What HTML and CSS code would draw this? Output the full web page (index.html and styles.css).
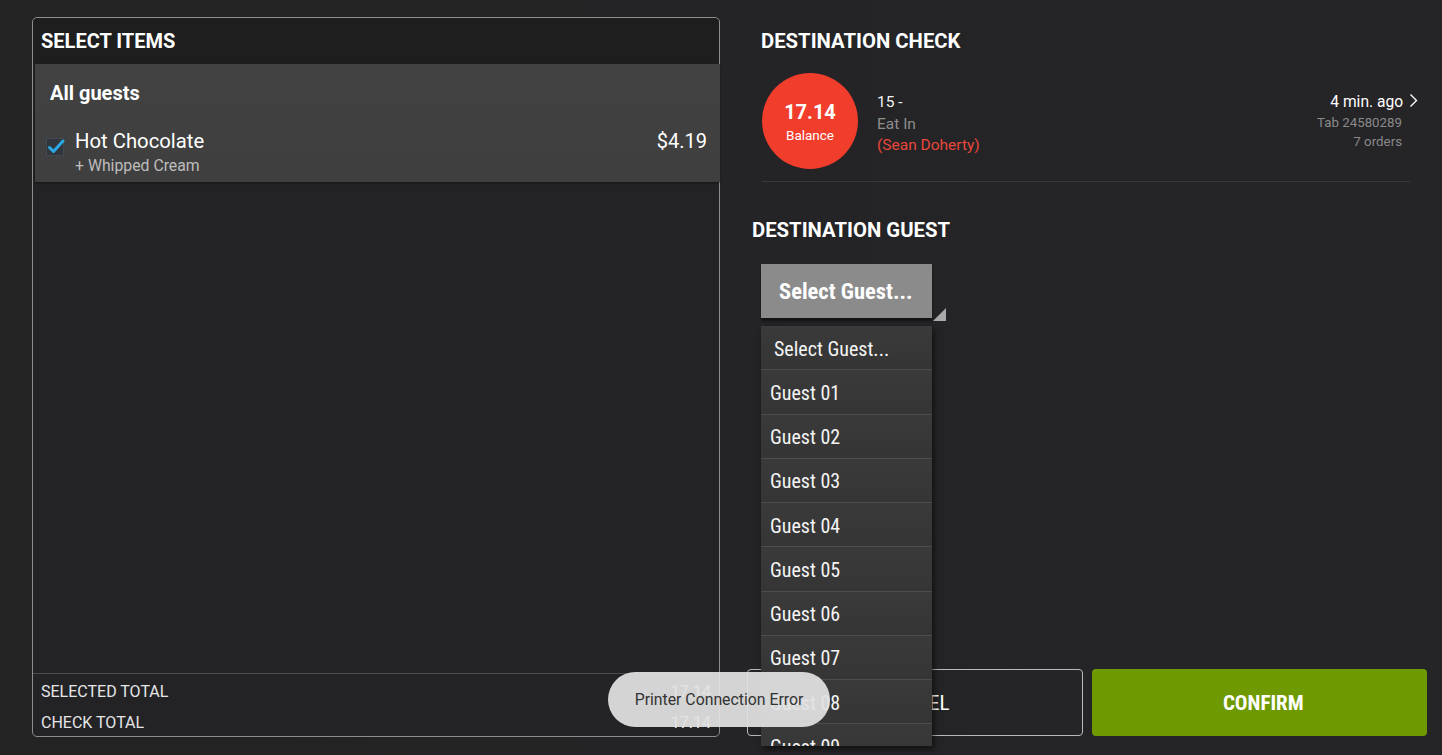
FILE: index.html
```html
<!DOCTYPE html>
<html lang="en">
<head>
<meta charset="utf-8">
<title>Move Items</title>
<link rel="stylesheet" href="styles.css">
</head>
<body>
<div class="screen">
  <section class="items-panel">
    <header class="panel-title">SELECT ITEMS</header>
    <div class="guest-group">
      <div class="group-name">All guests</div>
      <div class="item-row">
        <span class="checkbox">
          <svg width="22" height="22" viewBox="0 0 22 22">
            <rect x="1.5" y="3.5" width="17" height="17" fill="#30363c" stroke="#414a53"/>
            <path d="M4.5 12.5 L8.5 16.5 L18 6" fill="none" stroke="#2aa8e6" stroke-width="3" stroke-linecap="round" stroke-linejoin="round"/>
          </svg>
        </span>
        <div class="item-text">
          <div class="item-name">Hot Chocolate</div>
          <div class="item-mod">+ Whipped Cream</div>
        </div>
        <div class="item-price">$4.19</div>
      </div>
    </div>
    <div class="panel-fill"></div>
    <div class="totals">
      <div class="total-row"><span>SELECTED TOTAL</span><span class="total-val">17.14</span></div>
      <div class="total-row"><span>CHECK TOTAL</span><span class="total-val">17.14</span></div>
    </div>
  </section>

  <section class="dest">
    <h2 class="dest-title">DESTINATION CHECK</h2>
    <div class="check-card">
      <div class="balance"><b>17.14</b><span>Balance</span></div>
      <div class="check-info">
        <div class="ci-num">15 -</div>
        <div class="ci-type">Eat In</div>
        <div class="ci-name">(Sean Doherty)</div>
      </div>
      <div class="check-meta">
        <div class="cm-time">4 min. ago
          <svg class="chev" width="9" height="15" viewBox="0 0 9 15"><path d="M1.5 1.5 L7.5 7.5 L1.5 13.5" fill="none" stroke="#fff" stroke-width="1.4"/></svg>
        </div>
        <div class="cm-sub">Tab 24580289</div>
        <div class="cm-sub">7 orders</div>
      </div>
    </div>

    <h2 class="guest-title">DESTINATION GUEST</h2>
    <div class="select-wrap">
      <div class="select-btn">Select Guest...</div>
      <span class="select-corner"></span>
      <ul class="dropdown">
        <li class="dd-first">Select Guest...</li>
        <li>Guest 01</li>
        <li>Guest 02</li>
        <li>Guest 03</li>
        <li>Guest 04</li>
        <li>Guest 05</li>
        <li>Guest 06</li>
        <li>Guest 07</li>
        <li>Guest 08</li>
        <li>Guest 09</li>
        <li>Guest 10</li>
      </ul>
    </div>

    <div class="dest-fill"></div>
    <div class="actions">
      <button class="btn-cancel">CANCEL</button>
      <button class="btn-confirm">CONFIRM</button>
    </div>
  </section>

  <div class="toast">Printer Connection Error</div>
</div>
</body>
</html>
```

FILE: styles.css
```css
* { box-sizing: border-box; }

html, body {
  margin: 0;
  padding: 0;
  background: #232325;
  font-family: Roboto, "Liberation Sans", sans-serif;
  color: #fff;
}

.screen {
  width: 1442px;
  height: 755px;
  display: flex;
  padding: 17px 16px 18px 32px;
  gap: 27px;
  overflow: hidden;
  background: linear-gradient(90deg, #232323 0%, #242426 50%, #252427 100%);
}

/* ---------- left panel ---------- */
.items-panel {
  width: 688px;
  height: 720px;
  border: 1px solid #8d8d8f;
  border-radius: 5px;
  display: flex;
  flex-direction: column;
  background: #232326;
}

.panel-title {
  height: 46px;
  padding: 0 8px;
  display: flex;
  align-items: center;
  font-size: 20px;
  font-weight: 700;
  background: #1e1e1e;
  border-radius: 5px 5px 0 0;
}

.guest-group {
  margin-left: 2px;
  margin-right: -1px;
  padding: 17px 13px 7px 15px;
  background: linear-gradient(180deg, #424242 0%, #3f3f3f 100%);
  box-shadow: 0 1px 2px rgba(0,0,0,0.4);
}

.group-name {
  font-size: 20px;
  font-weight: 700;
  line-height: 24px;
}

.item-row {
  display: flex;
  align-items: flex-start;
  margin-top: 24px;
}

.checkbox {
  width: 22px;
  height: 22px;
  margin-left: -5px;
  margin-top: 6px;
  margin-right: 8px;
}

.item-text { flex: 1; }

.item-name {
  font-size: 20.3px;
  line-height: 24px;
}

.item-mod {
  margin-top: 4px;
  font-size: 15.8px;
  line-height: 18px;
  color: #bdbdbd;
}

.item-price {
  font-size: 20px;
  line-height: 24px;
}

.panel-fill { flex: 1; }

.totals {
  border-top: 1px solid #4c4c4e;
  margin-top: 1px;
  padding: 2px 8px 0 8px;
}

.total-row {
  height: 31px;
  display: flex;
  align-items: center;
  justify-content: space-between;
  font-size: 16px;
  color: #e6e6e6;
}

.total-row:last-child { height: 29px; padding-top: 1px; }

.total-val { color: #f0f0f0; }

/* ---------- right column ---------- */
.dest {
  flex: 1;
  display: flex;
  flex-direction: column;
  padding-top: 12px;
}

.dest-title, .guest-title {
  margin: 0;
  font-size: 20.3px;
  font-weight: 700;
  line-height: 24px;
}

.dest-title { padding-left: 14px; }

.check-card {
  margin: 20px 16px 0 15px;
  padding-bottom: 12px;
  border-bottom: 1px solid #38373a;
  display: flex;
  align-items: flex-start;
}

.balance {
  width: 96px;
  height: 96px;
  border-radius: 50%;
  background: #f03d2c;
  display: flex;
  flex-direction: column;
  align-items: center;
  justify-content: center;
  padding-top: 4px;
}

.balance b {
  font-size: 20px;
  line-height: 24px;
}

.balance span {
  font-size: 13.5px;
  line-height: 22px;
}

.check-info {
  margin-left: 19px;
  padding-top: 19px;
  flex: 1;
  font-size: 15.5px;
  line-height: 21.5px;
}

.ci-num { color: #f2f2f2; }
.ci-type { color: #8e8e8e; }
.ci-name { color: #e8473b; }

.check-meta {
  padding-top: 18px;
  text-align: right;
  margin-right: 8px;
}

.cm-time {
  font-size: 15.6px;
  line-height: 22px;
  margin-right: -16px;
}

.chev {
  margin-left: 2px;
  vertical-align: -1px;
}

.cm-sub {
  font-size: 13.3px;
  line-height: 19px;
  color: #8a8a8a;
}

.guest-title {
  margin-top: 36px;
  padding-left: 5px;
}

.select-wrap {
  position: relative;
  margin: 22px 0 0 14px;
  width: 186px;
}

.select-btn {
  width: 171px;
  height: 54px;
  background: #8b8b8b;
  box-shadow: 0 3px 2px rgba(0,0,0,0.45);
  padding-left: 18px;
  display: flex;
  align-items: center;
  font-family: "Roboto Condensed", "Liberation Sans Narrow", "DejaVu Sans Condensed", Roboto, sans-serif;
  font-stretch: condensed;
  font-size: 22.5px;
  font-weight: 700;
  color: #fff;
}

.select-corner {
  position: absolute;
  left: 172px;
  top: 44px;
  width: 0;
  height: 0;
  border-style: solid;
  border-width: 0 0 13px 13px;
  border-color: transparent transparent #a9a9a9 transparent;
}

.dropdown {
  position: absolute;
  left: 0;
  top: 62px;
  width: 171px;
  height: 420px;
  overflow: hidden;
  margin: 0;
  padding: 0;
  list-style: none;
  background: #373737;
  box-shadow: 2px 3px 6px rgba(0,0,0,0.55);
  z-index: 5;
}

.dropdown li {
  height: 44.25px;
  padding-left: 9px;
  padding-top: 2px;
  display: flex;
  align-items: center;
  border-bottom: 1px solid #4d4d4d;
  font-family: "Roboto Condensed", "Liberation Sans Narrow", "DejaVu Sans Condensed", Roboto, sans-serif;
  font-stretch: condensed;
  font-size: 20px;
  color: #f4f4f4;
  background: linear-gradient(180deg, #3a3a3a, #353535);
}

.dropdown li.dd-first { padding-left: 13px; }

.dest-fill { flex: 1; }

.actions {
  display: grid;
  grid-template-columns: 1fr 1fr;
  gap: 9px;
  height: 67px;
  margin-bottom: 1px;
  margin-right: -1px;
}

.actions button {
  border-radius: 4px;
  font-family: "Roboto Condensed", "Liberation Sans Narrow", Roboto, sans-serif;
  font-size: 21px;
  color: #fff;
  cursor: pointer;
}

.btn-cancel {
  background: transparent;
  border: 1px solid #b9b9b9;
  font-weight: 400;
}

.btn-confirm {
  background: #6f9900;
  border: none;
  font-weight: 700;
  font-stretch: condensed;
  text-indent: 8px;
}

/* ---------- toast ---------- */
.toast {
  position: absolute;
  left: 608px;
  top: 672px;
  width: 222px;
  height: 55px;
  border-radius: 28px;
  background: rgba(226, 226, 226, 0.93);
  color: #333;
  font-size: 15.8px;
  display: flex;
  align-items: center;
  justify-content: center;
  z-index: 10;
}
```
